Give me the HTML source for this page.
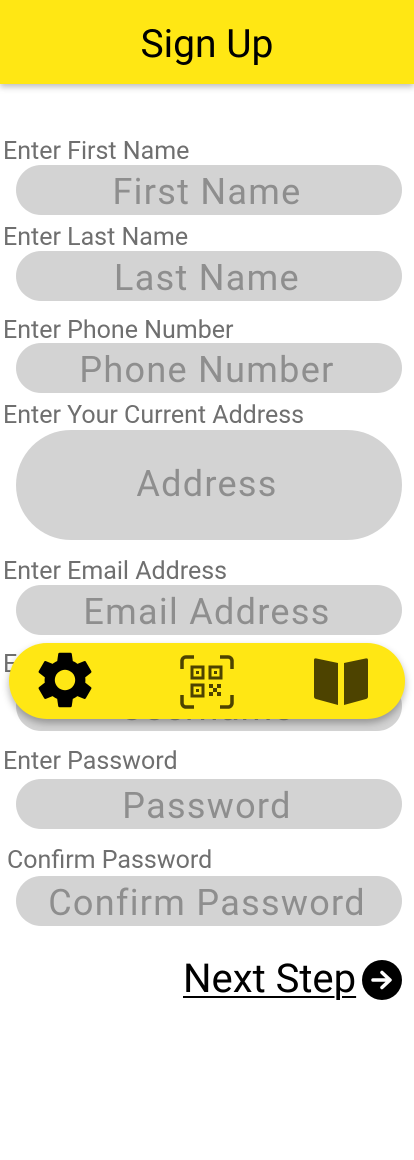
<!DOCTYPE html>
<html><head><meta charset="utf-8"><style>
*{margin:0;padding:0;box-sizing:border-box}
body{width:414px;height:1160px;background:#fff;position:relative;overflow:hidden;font-family:"Roboto","Liberation Sans",sans-serif}
.hdr{position:absolute;left:0;top:0;width:414px;height:84px;background:#FFE714;box-shadow:0 3px 6px rgba(0,0,0,.25);text-align:center;font-size:39px;line-height:88px;color:#000}
.lb{position:absolute;left:3px;font-size:25px;color:#6f6f6f;line-height:26px;white-space:nowrap}
.in{position:absolute;left:16px;width:386px;height:50px;border-radius:25px;background:#d3d3d3;color:#8e8e8e;font-size:36px;text-align:center;line-height:54px;letter-spacing:1.3px;padding-right:4px}
.nav{position:absolute;left:9px;top:643px;width:396px;height:76px;border-radius:38px;background:#FFE714;box-shadow:0 4px 8px rgba(0,0,0,.3)}
.ns{position:absolute;left:183px;top:955px;font-size:40px;line-height:48px;color:#000;text-decoration:underline;text-decoration-thickness:2px;text-underline-offset:4px}
</style></head><body>
<div class="hdr">Sign Up</div>
<div class="lb" style="top:139px">Enter First Name</div>
<div class="in" style="top:165px">First Name</div>
<div class="lb" style="top:225px">Enter Last Name</div>
<div class="in" style="top:251px">Last Name</div>
<div class="lb" style="top:318px">Enter Phone Number</div>
<div class="in" style="top:343px">Phone Number</div>
<div class="lb" style="top:403px">Enter Your Current Address</div>
<div class="in" style="top:430px;height:110px;border-radius:55px;line-height:108px">Address</div>
<div class="lb" style="top:559px">Enter Email Address</div>
<div class="in" style="top:585px">Email Address</div>
<div class="lb" style="top:652px">Enter Username</div>
<div class="in" style="top:681px">Username</div>
<div class="lb" style="top:749px">Enter Password</div>
<div class="in" style="top:779px">Password</div>
<div class="lb" style="top:848px;left:7px">Confirm Password</div>
<div class="in" style="top:876px">Confirm Password</div>
<div class="nav">
<svg style="position:absolute;left:22px;top:3px" width="68" height="68" viewBox="0 0 24 24"><path fill="#000" d="M19.14 12.94c.04-.3.06-.61.06-.94 0-.32-.02-.64-.07-.94l2.03-1.58a.49.49 0 0 0 .12-.61l-1.92-3.32a.49.49 0 0 0-.59-.22l-2.39.96c-.5-.38-1.03-.7-1.62-.94l-.36-2.54a.48.48 0 0 0-.48-.41h-3.84c-.24 0-.43.17-.47.41l-.36 2.54c-.59.24-1.13.57-1.62.94l-2.39-.96a.49.49 0 0 0-.59.22L2.74 8.87c-.12.21-.08.47.12.61l2.03 1.58c-.05.3-.09.63-.09.94s.02.64.07.94l-2.03 1.58a.49.49 0 0 0-.12.61l1.92 3.32c.12.22.37.29.59.22l2.39-.96c.5.38 1.03.7 1.62.94l.36 2.54c.05.24.24.41.48.41h3.84c.24 0 .44-.17.47-.41l.36-2.54c.59-.24 1.13-.56 1.62-.94l2.39.96c.22.08.47 0 .59-.22l1.92-3.32c.12-.22.07-.47-.12-.61l-2.01-1.58zM12 15.6A3.6 3.6 0 1 1 12 8.4a3.6 3.6 0 0 1 0 7.2z"/></svg>
<svg style="position:absolute;left:171px;top:12px" width="54" height="54" viewBox="0 0 54 54" fill="none" stroke="#4d4300" stroke-width="3.5"><path d="M2 14V6a4 4 0 0 1 4-4h8M40 2h8a4 4 0 0 1 4 4v8M52 40v8a4 4 0 0 1-4 4h-8M14 52H6a4 4 0 0 1-4-4v-8"/><rect x="12" y="12" width="11" height="11" stroke-width="3"/><rect x="30" y="12" width="11" height="11" stroke-width="3"/><rect x="12" y="30" width="11" height="11" stroke-width="3"/><g fill="#4d4300" stroke="none"><rect x="16" y="16" width="3" height="3"/><rect x="34" y="16" width="3" height="3"/><rect x="16" y="34" width="3" height="3"/><rect x="29" y="29" width="4" height="4"/><rect x="37" y="29" width="4" height="4"/><rect x="33" y="33" width="4" height="4"/><rect x="29" y="37" width="4" height="4"/><rect x="37" y="37" width="4" height="4"/></g></svg>
<svg style="position:absolute;left:303px;top:14px" width="58" height="48" viewBox="0 0 58 48"><path fill="#4d4300" d="M2 3c0-1.5 1-2 2.5-1.5L26 6v42L4 42c-1.3-.4-2-1.2-2-2.5zM56 3c0-1.5-1-2-2.5-1.5L32 6v42l22-6c1.3-.4 2-1.2 2-2.5z"/></svg>
</div>
<div class="ns">Next Step</div>
<svg style="position:absolute;left:362px;top:960px" width="40" height="40" viewBox="0 0 40 40"><circle cx="20" cy="20" r="20" fill="#000"/><path d="M11 20h16M20 12.5l8 7.5-8 7.5" fill="none" stroke="#fff" stroke-width="3.5" stroke-linecap="round" stroke-linejoin="round"/></svg>
</body></html>
